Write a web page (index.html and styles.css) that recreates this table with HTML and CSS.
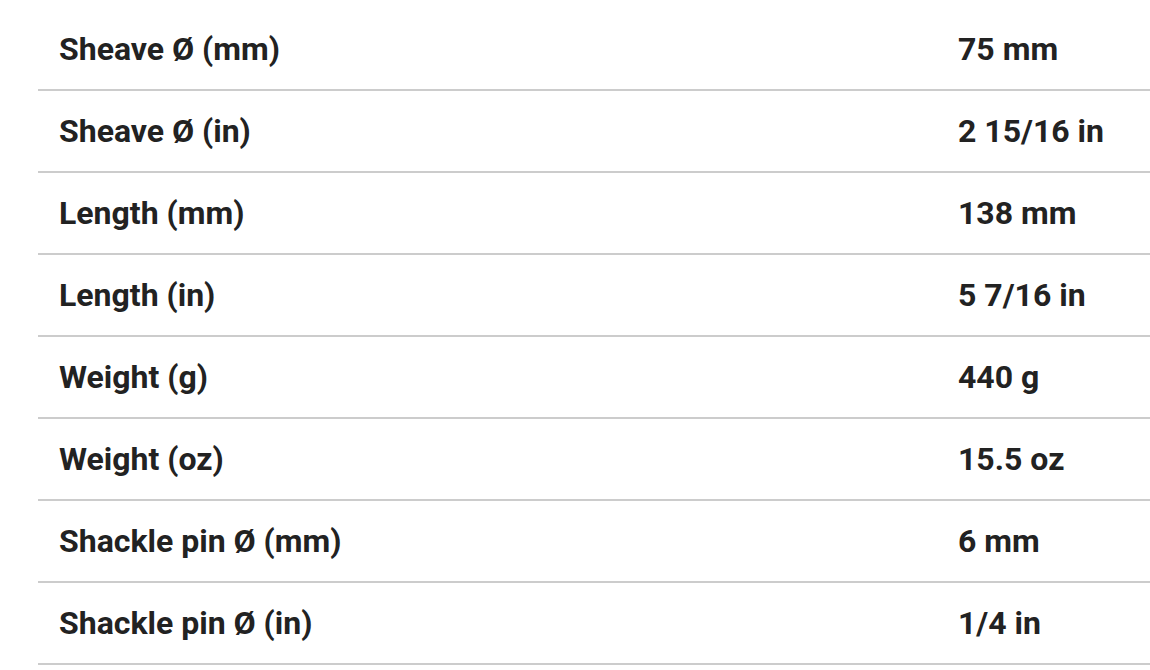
FILE: index.html
```html
<!DOCTYPE html>
<html>
<head>
<meta charset="utf-8">
<link rel="stylesheet" href="styles.css">
</head>
<body>
<div class="specs">
  <div class="row"><div class="label">Sheave Ø (mm)</div><div class="value">75 mm</div></div>
  <div class="row"><div class="label">Sheave Ø (in)</div><div class="value">2 15/16 in</div></div>
  <div class="row"><div class="label">Length (mm)</div><div class="value">138 mm</div></div>
  <div class="row"><div class="label">Length (in)</div><div class="value">5 7/16 in</div></div>
  <div class="row"><div class="label">Weight (g)</div><div class="value">440 g</div></div>
  <div class="row"><div class="label">Weight (oz)</div><div class="value">15.5 oz</div></div>
  <div class="row"><div class="label">Shackle pin Ø (mm)</div><div class="value">6 mm</div></div>
  <div class="row"><div class="label">Shackle pin Ø (in)</div><div class="value">1/4 in</div></div>
</div>
</body>
</html>
```
FILE: styles.css
```css
html, body {
  margin: 0;
  padding: 0;
  background: #fff;
  overflow: hidden;
}
body {
  font-family: Roboto, "Liberation Sans", sans-serif;
  color: #222;
}
.specs {
  margin: 9px 0 0 38px;
  width: 1140px;
}
.row {
  display: flex;
  height: 80px;
  align-items: center;
  border-bottom: 2px solid #cccccc;
  font-size: 32px;
  font-weight: 700;
}
.label {
  width: 920px;
  padding-left: 21px;
  box-sizing: border-box;
}
.value {
  flex: 1;
}
```
